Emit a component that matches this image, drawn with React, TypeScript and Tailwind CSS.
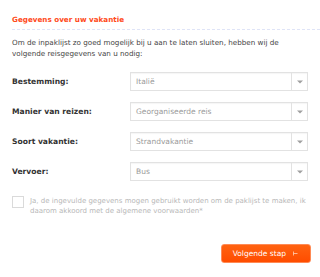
import React from "react";

const Select = ({ value }: { value: string }) => (
  <div className="flex h-[19px] w-[178px] border border-[#e2e2e2] bg-white shadow-[inset_0_1px_1px_rgba(0,0,0,0.04)]">
    <div className="flex-1 flex items-center pl-[5px] text-[7.5px] text-[#9a9a9a]">{value}</div>
    <div className="w-[16px] border-l border-[#e2e2e2] flex items-center justify-center">
      <svg width="6" height="4" viewBox="0 0 6 4"><path d="M0 0.5h6L3 3.5z" fill="#a0a0a0" /></svg>
    </div>
  </div>
);

const Row = ({ label, value }: { label: string; value: string }) => (
  <div className="flex items-center h-[19px]">
    <div className="w-[118px] text-[7.6px] font-bold text-[#333]">{label}</div>
    <Select value={value} />
  </div>
);

export default function App() {
  return (
    <div className="w-[320px] h-[277px] bg-white pl-[12px] pt-[15px] font-['DejaVu_Sans',sans-serif] overflow-hidden">
      <div className="text-[7.2px] font-bold text-[#ff4a1a] leading-[10px]">Gegevens over uw vakantie</div>
      <div className="mt-[4px] border-t border-dashed border-[#dfe4f7]" />
      <div className="mt-[7px] pr-[12px] text-[7.2px] leading-[11px] text-[#444]">
        Om de inpaklijst zo goed mogelijk bij u aan te laten sluiten, hebben wij de volgende reisgegevens van u nodig:
      </div>
      <div className="mt-[13px] flex flex-col gap-[11px]">
        <Row label="Bestemming:" value="Italië" />
        <Row label="Manier van reizen:" value="Georganiseerde reis" />
        <Row label="Soort vakantie:" value="Strandvakantie" />
        <Row label="Vervoer:" value="Bus" />
      </div>
      <div className="mt-[15px] flex items-start gap-[6px] pr-[12px]">
        <div className="w-[12px] h-[12px] border border-[#dadada] bg-white shrink-0" />
        <div className="text-[7px] leading-[10px] text-[#b8b8b8]">
          Ja, de ingevulde gegevens mogen gebruikt worden om de paklijst te maken, ik daarom akkoord met de algemene voorwaarden*
        </div>
      </div>
      <div className="mt-[28px] flex justify-end pr-[9px]">
        <button className="h-[19px] w-[90px] rounded-[3px] border border-[#ff8a55] bg-gradient-to-b from-[#ff6210] to-[#ff4c00] text-white text-[7.5px] flex items-center justify-end pr-[12px] gap-[7px]">
          <span>Volgende stap</span>
          <svg width="5" height="5" viewBox="0 0 5 5"><path d="M0.5 0.5v4M0.5 2.5h4" stroke="#ffd0b8" strokeWidth="0.8" fill="none" /></svg>
        </button>
      </div>
    </div>
  );
}
